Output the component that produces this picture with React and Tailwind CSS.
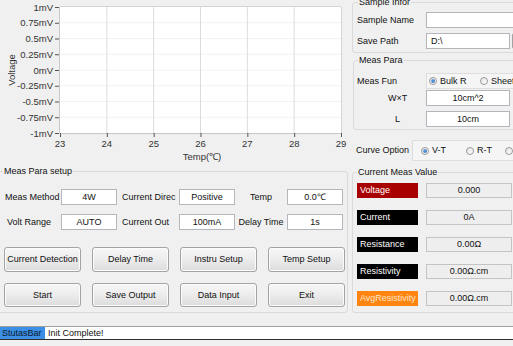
import clsx from 'clsx';

const yLabels = ['1mV', '0.75mV', '0.5mV', '0.25mV', '0mV', '-0.25mV', '-0.5mV', '-0.75mV', '-1mV'];
const xLabels = ['23', '24', '25', '26', '27', '28', '29'];

function Chart() {
  const left = 60;
  const right = 341;
  const top = 7;
  const bottom = 133;
  const xs = xLabels.map((_, i) => left + ((right - left) / 6) * i);
  const ys = yLabels.map((_, i) => top + ((bottom - top) / 8) * i);
  return (
    <svg width="348" height="165" className="block shrink-0" fontFamily="'Liberation Sans', Arial, sans-serif">
      <rect x={left} y={top} width={right - left} height={bottom - top} fill="#ffffff" />
      {ys.slice(1, -1).map((y) => (
        <line key={y} x1={left} x2={right} y1={y} y2={y} stroke="#f1f1f1" />
      ))}
      {xs.slice(1, -1).map((x) => (
        <line key={x} x1={x} x2={x} y1={top} y2={bottom} stroke="#dcdcdc" />
      ))}
      <line x1={left} x2={right} y1={top - 0.5} y2={top - 0.5} stroke="#d4d4d4" />
      <line x1={right + 0.5} x2={right + 0.5} y1={top} y2={bottom} stroke="#d4d4d4" />
      <line x1={left - 0.5} x2={left - 0.5} y1={top} y2={bottom} stroke="#c8c8c8" />
      <line x1={left} x2={right} y1={bottom + 0.5} y2={bottom + 0.5} stroke="#c8c8c8" />
      {ys.map((y, i) => (
        <g key={i}>
          <line x1={55} x2={59} y1={y + 0.5} y2={y + 0.5} stroke="#555" />
          <text x={53} y={y + 3.5} fontSize="9.5" fill="#333" textAnchor="end">{yLabels[i]}</text>
        </g>
      ))}
      {xs.map((x, i) => (
        <g key={i}>
          <line x1={x + 0.5} x2={x + 0.5} y1={bottom} y2={bottom + 4} stroke="#555" />
          <text x={x} y={147} fontSize="9.5" fill="#333" textAnchor="middle">{xLabels[i]}</text>
        </g>
      ))}
      <text x={202} y={160} fontSize="9.5" fill="#333" textAnchor="middle">Temp(℃)</text>
      <text x={15} y={70} fontSize="9.5" fill="#333" textAnchor="middle" transform="rotate(-90 15 70)">Voltage</text>
    </svg>
  );
}

function TextBox({ children, className }) {
  return (
    <div className={clsx('h-[16px] bg-white border border-[#b4b6bc] flex items-center justify-center text-[#111] shrink-0 whitespace-nowrap', className)}>
      {children}
    </div>
  );
}

function Btn({ children }) {
  return (
    <button className="w-[77px] whitespace-nowrap rounded-[3px] border border-[#a3a3a3] bg-gradient-to-b from-[#f7f7f7] via-[#ececec] to-[#dcdcdc] text-[#111] shadow-[inset_0_0_0_1px_#fbfbfb] flex items-center justify-center">
      {children}
    </button>
  );
}

function Radio({ checked, label, className }) {
  return (
    <div className={clsx('flex items-center gap-[3px] whitespace-nowrap shrink-0', className)}>
      <span className="w-[8px] h-[8px] rounded-full border border-[#9a9a9a] bg-gradient-to-br from-[#e4e4e4] to-[#ffffff] flex items-center justify-center shrink-0">
        {checked && <span className="w-[4px] h-[4px] rounded-full bg-gradient-to-br from-[#7fc0f5] to-[#1f63b8]" />}
      </span>
      {label && <span>{label}</span>}
    </div>
  );
}

function MeasRow({ label, color, text, value }) {
  return (
    <div className="flex items-center h-[15px]">
      <div className={clsx('w-[61px] h-[15px] ml-[4px] pl-[3px] flex items-center whitespace-nowrap overflow-hidden', color, text)}>{label}</div>
      <div className="ml-[8px] w-[86px] h-[15px] bg-[#eeeeee] border border-[#c4c4c4] flex items-center justify-center text-[#111]">
        {value}
      </div>
    </div>
  );
}

export default function App() {
  return (
    <div className="w-[513px] h-[346px] overflow-hidden bg-[#f0f0f0] flex flex-col text-[9px] leading-[11px] text-[#111] [font-family:'Liberation_Sans',Arial,sans-serif]">
      <div className="h-[326px] flex shrink-0">
        {/* left column */}
        <div className="w-[348px] shrink-0 flex flex-col">
          <Chart />
          <fieldset className="-ml-[3px] mt-[1px] h-[147px] w-[351px] border border-[#dadada] rounded-[3px]">
            <legend className="ml-[5px] px-[1px]">Meas Para setup</legend>
            <div className="mt-[12px] flex flex-col gap-[9px] pl-[3px] whitespace-nowrap">
              <div className="flex items-center">
                <span className="w-[60px] pl-[4px]">Meas Method</span>
                <TextBox className="w-[56px]">4W</TextBox>
                <span className="w-[62px] pl-[5px]">Current Direc</span>
                <TextBox className="w-[56px]">Positive</TextBox>
                <span className="w-[52px] text-center">Temp</span>
                <TextBox className="w-[56px]">0.0℃</TextBox>
              </div>
              <div className="flex items-center">
                <span className="w-[60px] pl-[6px]">Volt Range</span>
                <TextBox className="w-[56px]">AUTO</TextBox>
                <span className="w-[62px] pl-[5px]">Current Out</span>
                <TextBox className="w-[56px]">100mA</TextBox>
                <span className="w-[52px] text-center">Delay Time</span>
                <TextBox className="w-[56px]">1s</TextBox>
              </div>
            </div>
            <div className="mt-[17px] ml-[6px] grid grid-cols-[77px_77px_77px_77px] gap-x-[11px] gap-y-[11px] [grid-template-rows:25px_24px]">
              <Btn>Current Detection</Btn>
              <Btn>Delay Time</Btn>
              <Btn>Instru Setup</Btn>
              <Btn>Temp Setup</Btn>
              <Btn>Start</Btn>
              <Btn>Save Output</Btn>
              <Btn>Data Input</Btn>
              <Btn>Exit</Btn>
            </div>
          </fieldset>
        </div>

        {/* right column */}
        <div className="w-[180px] shrink-0 flex flex-col pl-[4px] whitespace-nowrap">
          <fieldset className="-mt-[3px] h-[56px] border border-[#dadada] rounded-[3px]">
            <legend className="ml-[5px] px-[1px]">Sample Infor</legend>
            <div className="mt-[4px] flex flex-col gap-[5px]">
              <div className="flex items-center">
                <span className="w-[73px] pl-[4px]">Sample Name</span>
                <TextBox className="w-[100px]" />
              </div>
              <div className="flex items-center">
                <span className="w-[73px] pl-[4px]">Save Path</span>
                <TextBox className="w-[84px] justify-start pl-[4px]">D:\</TextBox>
                <div className="ml-[2px] w-[20px] h-[16px] rounded-[2px] border border-[#a3a3a3] bg-gradient-to-b from-[#f7f7f7] to-[#dcdcdc]" />
              </div>
            </div>
          </fieldset>
          <fieldset className="mt-[2px] ml-[1px] h-[75px] border border-[#dadada] rounded-[3px]">
            <legend className="ml-[4px] px-[1px]">Meas Para</legend>
            <div className="mt-[7px] flex items-center">
              <span className="w-[72px] pl-[3px]">Meas Fun</span>
              <div className="h-[16px] w-[100px] border border-[#dedede] bg-[#f5f5f5] flex items-center">
                <Radio checked label="Bulk R" className="ml-[2px] w-[51px]" />
                <Radio label="Sheet" />
              </div>
            </div>
            <div className="mt-[1px] flex items-center">
              <span className="w-[72px] pl-[34px]">W×T</span>
              <TextBox className="w-[84px]">10cm^2</TextBox>
            </div>
            <div className="mt-[5px] flex items-center">
              <span className="w-[72px] pl-[41px]">L</span>
              <TextBox className="w-[84px]">10cm</TextBox>
            </div>
          </fieldset>
          <div className="mt-[10px] flex items-center">
            <span className="w-[60px] pl-[4px]">Curve Option</span>
            <div className="h-[21px] w-[110px] border border-[#dedede] bg-[#f5f5f5] flex items-center">
              <Radio checked label="V-T" className="ml-[8px] w-[45px]" />
              <Radio label="R-T" className="w-[39px]" />
              <Radio />
            </div>
          </div>
          <fieldset className="mt-[6px] h-[146px] border border-[#dadada] rounded-[3px]">
            <legend className="ml-[4px] px-[1px]">Current Meas Value</legend>
            <div className="mt-[5px] flex flex-col gap-[12px]">
              <MeasRow label="Voltage" color="bg-[#a80000]" text="text-white" value="0.000" />
              <MeasRow label="Current" color="bg-black" text="text-white" value="0A" />
              <MeasRow label="Resistance" color="bg-black" text="text-white" value="0.00Ω" />
              <MeasRow label="Resistivity" color="bg-black" text="text-white" value="0.00Ω.cm" />
              <MeasRow label="AvgResistivity" color="bg-[#ff8410]" text="text-[#ffe6c8]" value="0.00Ω.cm" />
            </div>
          </fieldset>
        </div>
      </div>

      {/* status bar */}
      <div className="h-[14px] shrink-0 border-t border-[#a0a0a0] border-b border-b-[#2e2e2e] bg-white flex items-center">
        <div className="w-[45px] h-full bg-[#3b8fe6] flex items-center pl-[2px] text-[#0b1a2c]">StutasBar</div>
        <span className="ml-[3px]">Init Complete!</span>
      </div>
    </div>
  );
}
